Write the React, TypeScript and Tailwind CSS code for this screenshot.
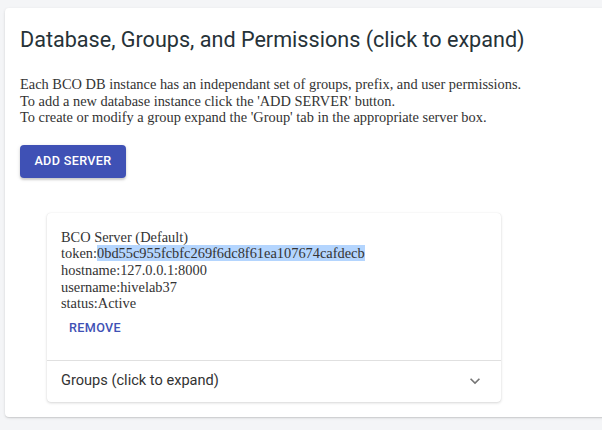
import React from "react";

export default function App() {
  return (
    <div className="h-[430px] w-[602px] overflow-hidden bg-[#f4f5f7] pt-[8px] pl-[5px]">
      <div className="w-[620px] rounded-[4px] bg-white pt-[18px] pb-[15px] pl-[15px] shadow-[0_1px_3px_rgba(0,0,0,0.12),0_1px_1px_rgba(0,0,0,0.08)]">
        <h1
          className="text-[21.6px] leading-[28px] font-normal text-[#263238]"
          style={{ fontFamily: "Roboto, sans-serif" }}
        >
          Database, Groups, and Permissions (click to expand)
        </h1>
        <div
          className="mt-[22px] text-[14.4px] leading-[16.6px] text-[#333]"
          style={{ fontFamily: '"Liberation Serif", serif' }}
        >
          <div>Each BCO DB instance has an independant set of groups, prefix, and user permissions.</div>
          <div>To add a new database instance click the 'ADD SERVER' button.</div>
          <div>To create or modify a group expand the 'Group' tab in the appropriate server box.</div>
        </div>
        <button
          className="mt-[19px] flex h-[33px] w-[106px] items-center justify-center rounded-[4px] bg-[#3f51b5] text-[12.6px] font-medium tracking-[0.36px] text-white shadow-[0_2px_2px_rgba(0,0,0,0.14),0_1px_4px_rgba(0,0,0,0.12)]"
          style={{ fontFamily: "Roboto, sans-serif" }}
        >
          ADD SERVER
        </button>
        <div className="mt-[35px] ml-[27px] w-[454px] rounded-[4px] bg-white shadow-[0_1px_3px_rgba(0,0,0,0.16),0_0_1px_rgba(0,0,0,0.10)]">
          <div className="pt-[16px] pb-[16px] pl-[14px]">
            <div
              className="text-[14.4px] leading-[16.6px] text-[#333]"
              style={{ fontFamily: '"Liberation Serif", serif' }}
            >
              <div>BCO Server (Default)</div>
              <div>
                token:<span className="bg-[#b4d5fe]">0bd55c955fcbfc269f6dc8f61ea107674cafdecb</span>
              </div>
              <div>hostname:127.0.0.1:8000</div>
              <div>username:hivelab37</div>
              <div>status:Active</div>
            </div>
            <button
              className="mt-[2px] flex h-[30px] items-center px-[8px] text-[12.6px] font-medium tracking-[0.36px] text-[#3f51b5]"
              style={{ fontFamily: "Roboto, sans-serif" }}
            >
              REMOVE
            </button>
          </div>
          <div className="flex h-[42px] items-center justify-between border-t border-[#e0e0e0] pl-[14px] pr-[16px]">
            <span
              className="text-[14.6px] text-[#333]"
              style={{ fontFamily: "Roboto, sans-serif" }}
            >
              Groups (click to expand)
            </span>
            <svg width="20" height="20" viewBox="0 0 24 24" className="text-[#757575]">
              <path fill="currentColor" d="M16.59 8.59 12 13.17 7.41 8.59 6 10l6 6 6-6z" />
            </svg>
          </div>
        </div>
      </div>
    </div>
  );
}
